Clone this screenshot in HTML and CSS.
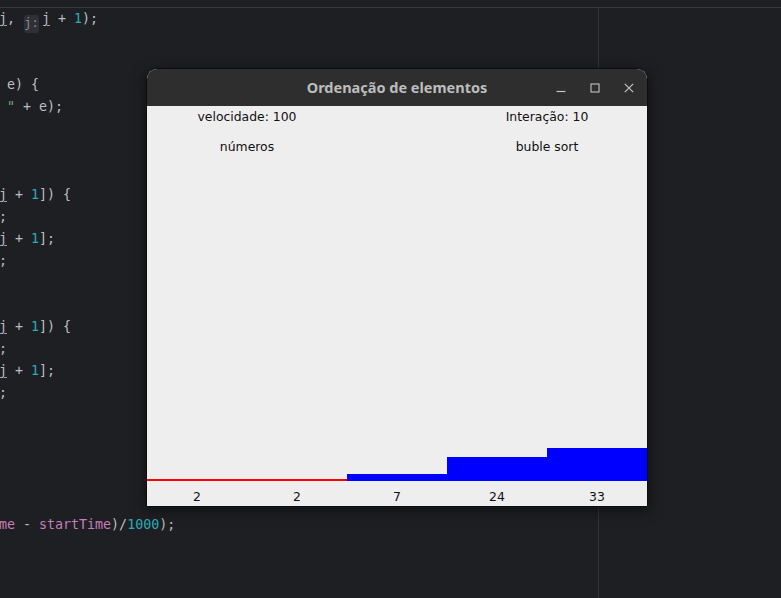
FILE: index.html
```html
<!DOCTYPE html>
<html lang="pt">
<head>
<meta charset="utf-8">
<title>Ordenação de elementos</title>
<link rel="stylesheet" href="styles.css">
</head>
<body>
<div class="ide">
  <div class="tabbar"></div>
  <div class="editor">
    <div class="code">
      <div class="ln"><span class="u">j</span>, <span class="hint">j:</span><span class="u">j</span> + <span class="n">1</span>);</div>
      <div class="ln"></div>
      <div class="ln"></div>
      <div class="ln"> e) {</div>
      <div class="ln"> <span class="s">"</span> + e);</div>
      <div class="ln"></div>
      <div class="ln"></div>
      <div class="ln"></div>
      <div class="ln"><span class="u">j</span> + <span class="n">1</span>]) {</div>
      <div class="ln">;</div>
      <div class="ln"><span class="u">j</span> + <span class="n">1</span>];</div>
      <div class="ln">;</div>
      <div class="ln"></div>
      <div class="ln"></div>
      <div class="ln"><span class="u">j</span> + <span class="n">1</span>]) {</div>
      <div class="ln">;</div>
      <div class="ln"><span class="u">j</span> + <span class="n">1</span>];</div>
      <div class="ln">;</div>
      <div class="ln"></div>
      <div class="ln"></div>
      <div class="ln"></div>
      <div class="ln"></div>
      <div class="ln"></div>
      <div class="ln"><span class="f">me</span> - <span class="f">startTime</span>)/<span class="n">1000</span>);</div>
    </div>
    <div class="margin-line"></div>
  </div>
</div>

<div class="window">
  <div class="titlebar">
    <div class="title">Ordenação de elementos</div>
    <div class="controls">
      <span class="btn">
        <svg width="10" height="10" viewBox="0 0 10 10"><path d="M0.5 8.5H9.5" stroke="#c4c4c4" stroke-width="1.2"/></svg>
      </span>
      <span class="btn">
        <svg width="10" height="10" viewBox="0 0 10 10"><rect x="1" y="1" width="8" height="8" fill="none" stroke="#c4c4c4" stroke-width="1.1"/></svg>
      </span>
      <span class="btn">
        <svg width="10" height="10" viewBox="0 0 10 10"><path d="M0.8 0.8L9.2 9.2M9.2 0.8L0.8 9.2" stroke="#c4c4c4" stroke-width="1.2"/></svg>
      </span>
    </div>
  </div>
  <div class="content">
    <div class="info">
      <div class="lbl left">velocidade: 100</div>
      <div class="lbl right">Interação: 10</div>
      <div class="lbl left">números</div>
      <div class="lbl right">buble sort</div>
    </div>
    <div class="chart">
      <div class="col"><div class="bar red" style="height:2px"></div></div>
      <div class="col"><div class="bar red" style="height:2px"></div></div>
      <div class="col"><div class="bar" style="height:7px"></div></div>
      <div class="col"><div class="bar" style="height:24px"></div></div>
      <div class="col"><div class="bar" style="height:33px"></div></div>
    </div>
    <div class="values">
      <div>2</div><div>2</div><div>7</div><div>24</div><div>33</div>
    </div>
  </div>
</div>
</body>
</html>
```

FILE: styles.css
```css
html, body {
  margin: 0;
  padding: 0;
}
body {
  background: #1e1f22;
  width: 781px;
  height: 598px;
  overflow: hidden;
  position: relative;
}
.ide {
  display: flex;
  flex-direction: column;
  height: 598px;
}
.tabbar {
  height: 7px;
  border-bottom: 1px solid #393b40;
}
.editor {
  flex: 1;
  display: flex;
  min-height: 0;
}
.code {
  width: 599px;
  margin-left: -1px;
  font-family: "DejaVu Sans Mono", monospace;
  font-size: 13.3px;
  color: #bcbec4;
}
.ln {
  height: 22px;
  line-height: 22px;
  white-space: pre;
}
.u {
  text-decoration: underline;
  text-decoration-color: #9a9ca2;
  text-underline-offset: 2px;
}
.n { color: #2aacb8; }
.s { color: #6aab73; }
.f { color: #c77dbb; }
.hint {
  display: inline-block;
  width: 15px;
  height: 18px;
  line-height: 17px;
  margin: 0 3px 0 1px;
  background: #2e3035;
  border-radius: 3px;
  color: #8b8e94;
  font-size: 12px;
  text-align: center;
  vertical-align: -4px;
}
.margin-line {
  width: 1px;
  background: #313337;
}

.window {
  position: absolute;
  left: 146px;
  top: 68px;
  width: 500px;
  border: 1px solid #0d0d0d;
  border-radius: 11px 11px 0 0;
  box-shadow: 0 3px 14px rgba(0, 0, 0, 0.55);
  background: #eeeeee;
}
.titlebar {
  height: 37px;
  background: #2e2e2e;
  border-radius: 10px 10px 0 0;
  display: flex;
  align-items: center;
  justify-content: center;
  position: relative;
}
.title {
  font-family: "Noto Sans", "DejaVu Sans", sans-serif;
  font-weight: bold;
  font-size: 14.5px;
  color: #bdbdbd;
  margin-top: -1px;
}
.controls {
  position: absolute;
  right: 13px;
  top: 0;
  height: 37px;
  display: flex;
  align-items: center;
  gap: 24px;
}
.btn {
  display: flex;
  width: 10px;
  height: 10px;
  margin-top: 1px;
}
.content {
  height: 400px;
  display: flex;
  flex-direction: column;
  font-family: "DejaVu Sans", sans-serif;
  font-size: 12.4px;
  color: #111111;
}
.info {
  display: grid;
  grid-template-columns: 200px 100px 200px;
  row-gap: 15px;
  padding-top: 3px;
  line-height: 15px;
}
.lbl {
  text-align: center;
}
.lbl.left { grid-column: 1; }
.lbl.right { grid-column: 3; }
.chart {
  flex: 1;
  display: grid;
  grid-template-columns: repeat(5, 100px);
  align-items: end;
}
.col {
  display: flex;
  align-items: flex-end;
  height: 100%;
}
.bar {
  width: 100%;
  background: #0000ff;
}
.bar.red {
  background: #ff0000;
}
.values {
  height: 25px;
  box-sizing: border-box;
  padding-top: 8px;
  line-height: 15px;
  display: grid;
  grid-template-columns: repeat(5, 100px);
  text-align: center;
}
```
